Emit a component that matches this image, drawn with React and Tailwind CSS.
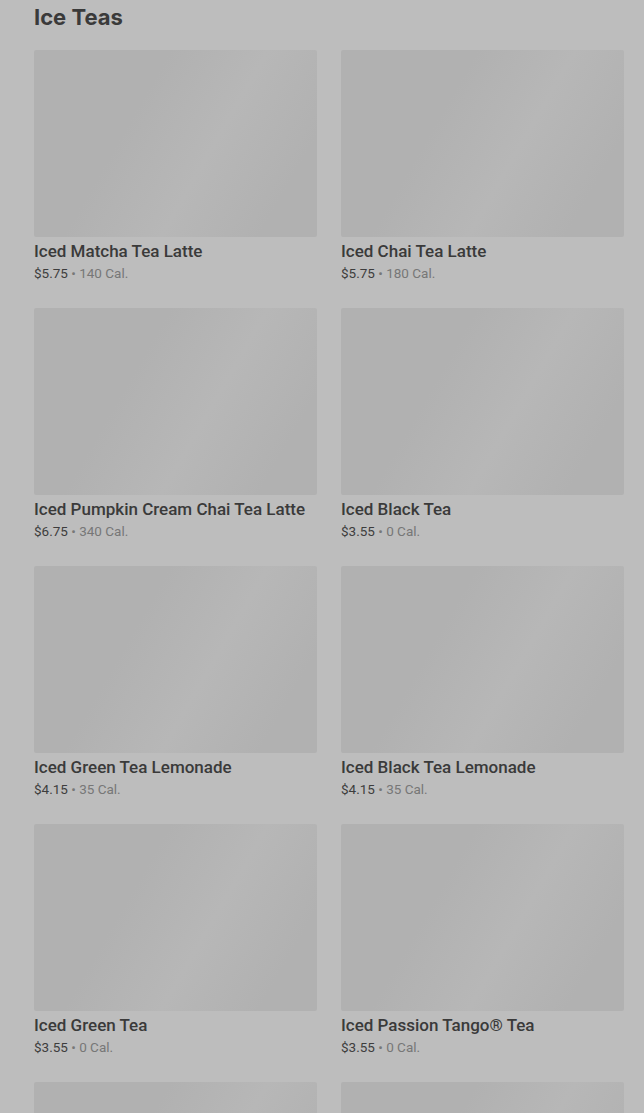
import React from 'react';

const teas = [
  { name: 'Iced Matcha Tea Latte', price: '$5.75', cal: '140 Cal.' },
  { name: 'Iced Chai Tea Latte', price: '$5.75', cal: '180 Cal.' },
  { name: 'Iced Pumpkin Cream Chai Tea Latte', price: '$6.75', cal: '340 Cal.' },
  { name: 'Iced Black Tea', price: '$3.55', cal: '0 Cal.' },
  { name: 'Iced Green Tea Lemonade', price: '$4.15', cal: '35 Cal.' },
  { name: 'Iced Black Tea Lemonade', price: '$4.15', cal: '35 Cal.' },
  { name: 'Iced Green Tea', price: '$3.55', cal: '0 Cal.' },
  { name: 'Iced Passion Tango® Tea', price: '$3.55', cal: '0 Cal.' },
  { loading: true },
  { loading: true },
];

const TeaCard = ({ tea }) => (
  <div className="flex flex-col">
    {/* placeholder image with a soft shimmer */}
    <div className="h-[187px] rounded-[2px] bg-[linear-gradient(120deg,#b1b1b1_0%,#b1b1b1_35%,#b7b7b7_60%,#b1b1b1_85%)]" />
    {!tea.loading && (
      <>
        <div className="mt-[4px] text-[17px] leading-[21px] font-medium text-[#3a3a3a]">{tea.name}</div>
        <div className="mt-[3px] text-[13.5px] leading-[16px] text-[#3d3d3d]">
          {tea.price}
          <span className="text-[#777777]"> • {tea.cal}</span>
        </div>
      </>
    )}
  </div>
);

const App = () => {
  return (
    <div
      className="h-screen bg-[#bdbdbd] pl-[34px] pr-[20px] overflow-hidden"
      style={{ fontFamily: 'Roboto, "Liberation Sans", sans-serif' }}
    >
      <h2
        className="pt-[3px] text-[22px] leading-[28px] font-bold text-[#3a3a3a]"
        style={{ fontFamily: 'Inter, "Liberation Sans", sans-serif' }}
      >
        Ice Teas
      </h2>
      <div className="mt-[19px] grid grid-cols-2 gap-x-[24px] gap-y-[27px]">
        {teas.map((tea, i) => (
          <TeaCard key={i} tea={tea} />
        ))}
      </div>
    </div>
  );
};

export default App;
